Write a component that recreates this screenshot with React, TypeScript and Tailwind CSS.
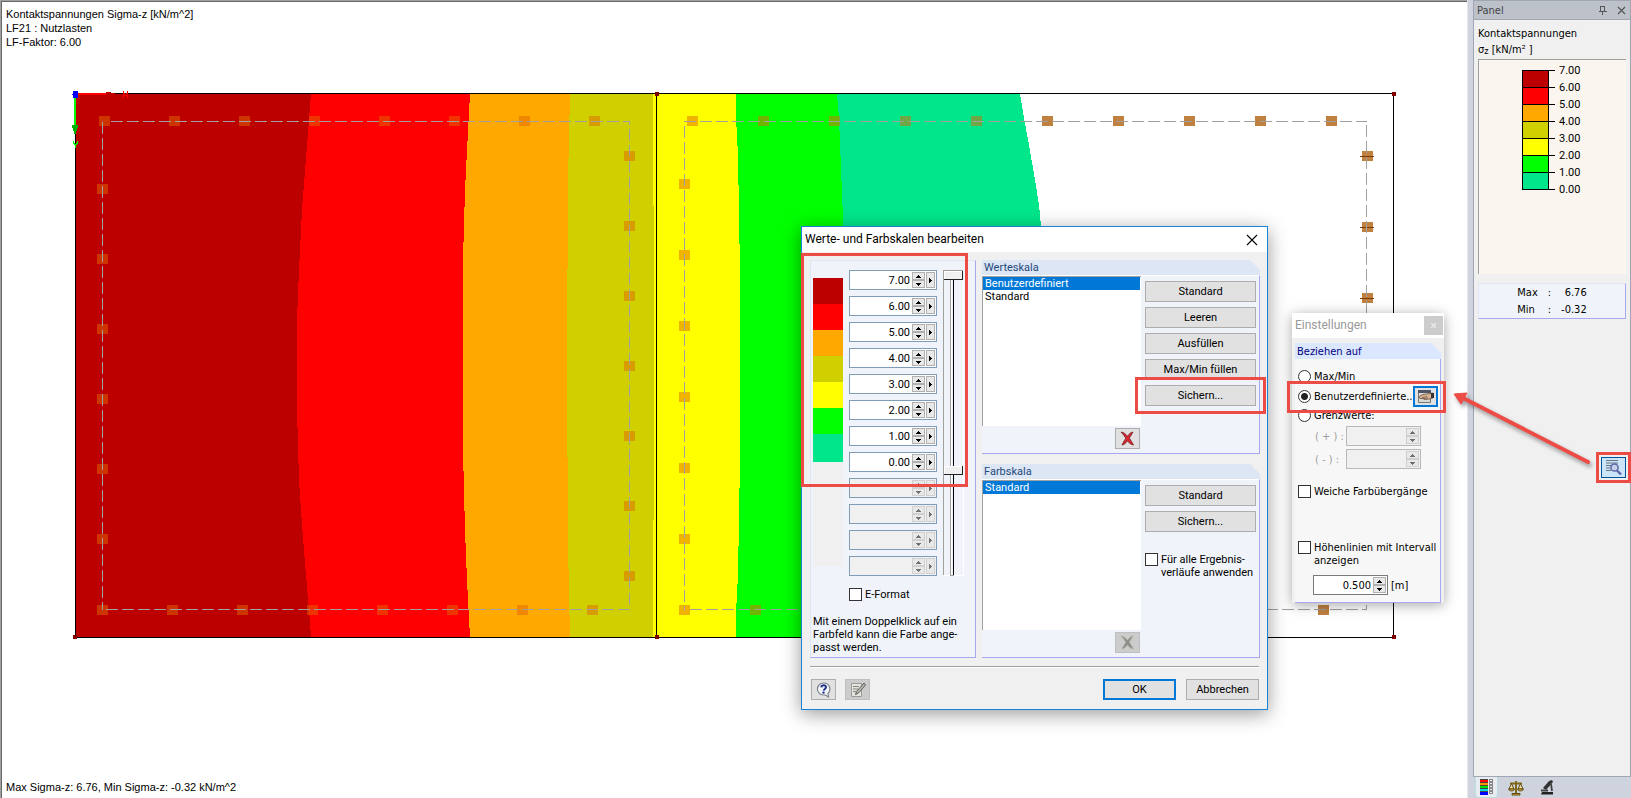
import { useId, type ReactNode } from "react";
import { clsx } from "clsx";

const ui = "font-['Roboto','Liberation_Sans',sans-serif] text-[11px] leading-[13px]";
const tahoma = "font-['DejaVu_Sans_Condensed','DejaVu_Sans',sans-serif] text-[11px] leading-[13px]";

const scale = [
    { value: "7.00", color: "#bc0000" },
    { value: "6.00", color: "#ff0000" },
    { value: "5.00", color: "#ffa800" },
    { value: "4.00", color: "#d0d000" },
    { value: "3.00", color: "#ffff00" },
    { value: "2.00", color: "#00ff00" },
    { value: "1.00", color: "#00e68a" },
    { value: "0.00", color: "" },
];

const range = (start: number, step: number, count: number) =>
    Array.from({ length: count }, (_, i) => start + i * step);

function Support({ x, y, solid, line }: { x: number; y: number; solid?: boolean; line?: boolean }) {
    return (
        <g>
            <rect x={x - 5} y={y - 5} width="11" height="10" fill={solid ? "#c08040" : "#e06800"} fillOpacity={solid ? 1 : 0.5} />
            {line && <path d={`M${x - 7} ${y + 0.5}h14`} stroke="#7a3c00" />}
        </g>
    );
}

function Plot() {
    return (
        <svg className="absolute inset-0 h-full w-full" shapeRendering="crispEdges" aria-hidden="true">
            <rect x="76" y="94" width="580" height="543" fill="#bc0000" />
            <path d="M311 94L309 120L305 170L302 210L299 270L297 320L297 410L299 480L302 525L305 563L309 610L311 637H740V94Z" fill="#ff0000" />
            <path d="M470 94L467 150L465 190L463 260L463 365L463 450L465 530L467 580L470 637H740V94Z" fill="#ffa800" />
            <path d="M570 94L568 180L567 365L568 545L570 637H740V94Z" fill="#d0d000" />
            <path d="M653 94V206H654V520H653V637H740V94Z" fill="#ffff00" />
            <path d="M736 94V118L738 155L740 272V460L738 575L736 612V637H900V94Z" fill="#00ff00" />
            <path d="M837 94L839 118L843 218L845 365L837 637H1020L1035 540L1044 365L1041 226L1039 205L1035 180L1029 145L1024 118L1020 94Z" fill="#00e68a" />

            {range(104, 70, 8).map((x) => <Support key={x} x={x} y={121} />)}
            {range(102, 70, 8).map((x) => <Support key={x} x={x} y={610} />)}
            {range(189, 70, 6).map((y) => <Support key={y} x={102} y={y} />)}
            {range(156, 70, 7).map((y) => <Support key={y} x={629} y={y} />)}
            {range(692, 71, 5).map((x) => <Support key={x} x={x} y={121} />)}
            {range(1047, 71, 5).map((x) => <Support key={x} x={x} y={121} solid />)}
            {range(184, 71, 6).map((y) => <Support key={y} x={684} y={y} />)}
            {range(684, 71, 2).map((x) => <Support key={x} x={x} y={610} />)}
            {range(156, 71, 6).map((y) => <Support key={y} x={1367} y={y} solid line />)}
            <Support x={1323} y={610} solid />

            <g fill="none" stroke="#a0a0a0" strokeDasharray="12 4">
                <path d="M111 121.5H629" />
                <path d="M102.5 122V610" />
                <path d="M629.5 121V610" strokeDashoffset="8" />
                <path d="M106 609.5H629" />
                <path d="M684 121.5H1367" />
                <path d="M684.5 126V610" />
                <path d="M1366.5 125V610" />
                <path d="M690 609.5H1367" />
            </g>

            <path d="M75.5 93.5H1393.5V637.5H75.5ZM656.5 93.5V637.5" fill="none" stroke="#000" />
            <g fill="#800000">
                <rect x="73" y="635" width="4" height="4" />
                <rect x="655" y="92" width="4" height="4" />
                <rect x="655" y="635" width="4" height="4" />
                <rect x="1392" y="92" width="4" height="4" />
                <rect x="1392" y="635" width="4" height="4" />
            </g>

            <path d="M78 94H107" stroke="#ff0000" strokeWidth="2" />
            <path d="M106 92h5v1h4v2h-4v1h-5Z" fill="#bc0000" />
            <path d="M123.5 91v2l4 3v2M127.5 91v2l-4 3v2" stroke="#ff0000" fill="none" />
            <path d="M75 96V126" stroke="#00ff00" strokeWidth="2" />
            <path d="M72 125h6v2l-2 5v2h-2v-2l-2-5Z" fill="#00b000" />
            <path d="M73.5 141v2l2 2v3M77.5 141v2l-2 2" stroke="#00ff00" fill="none" />
            <path d="M73 91h5v7h-5v-3h-1v-1h1Z" fill="#0000ff" />
        </svg>
    );
}

function Spin({ value, label, width, more, disabled, tone }: {
    value?: string; label: string; width: string; more?: boolean; disabled?: boolean; tone: string;
}) {
    const button = clsx("flex items-center justify-center border bg-[#e8e8e8]", disabled ? "border-[#d0d0d0]" : "border-[#b0b0b0]");
    const ink = disabled ? "#707070" : "#000";
    return (
        <div className={clsx("flex h-5 border p-px", width, tone, disabled ? "bg-[#f0f0f0]" : "bg-white")}>
            <input aria-label={label} defaultValue={value} disabled={disabled} className="w-0 min-w-0 flex-1 bg-transparent pr-0.5 text-right outline-none" />
            <div className="flex w-[13px] flex-col">
                <button disabled={disabled} aria-label={`${label} erhöhen`} className={clsx(button, "flex-1")}>
                    <svg width="5" height="3" shapeRendering="crispEdges"><path d="M2 0h1v1h1v1h1v1H0V2h1V1h1Z" fill={ink} /></svg>
                </button>
                <button disabled={disabled} aria-label={`${label} verringern`} className={clsx(button, "flex-1")}>
                    <svg width="5" height="3" shapeRendering="crispEdges"><path d="M0 0h5v1H4v1H3v1H2V2H1V1H0Z" fill={ink} /></svg>
                </button>
            </div>
            {more && (
                <button disabled={disabled} aria-label={`${label} auswählen`} className={clsx(button, "ml-px w-[9px]")}>
                    <svg width="3" height="5" shapeRendering="crispEdges"><path d="M0 0h1v1h1v1h1v1H2v1H1v1H0Z" fill={ink} /></svg>
                </button>
            )}
        </div>
    );
}

function Check({ type = "checkbox", name, checked, children }: {
    type?: "checkbox" | "radio"; name?: string; checked?: boolean; children: ReactNode;
}) {
    const id = useId();
    return (
        <div className="flex items-start gap-[3px]">
            <input
                id={id}
                type={type}
                name={name}
                defaultChecked={checked}
                className={clsx(
                    "size-[13px] shrink-0 appearance-none border border-[#333] bg-white",
                    type === "radio" && "rounded-full checked:bg-[radial-gradient(circle,#222_0_3px,#fff_4px)]",
                )}
            />
            <label htmlFor={id} className="whitespace-nowrap">{children}</label>
        </div>
    );
}

function PushButton({ children, primary, className }: { children: ReactNode; primary?: boolean; className: string }) {
    return (
        <button className={clsx("h-[21px] bg-[#e1e1e1]", primary ? "border-2 border-[#0078d7]" : "border border-[#adadad]", className)}>
            {children}
        </button>
    );
}

function IconButton({ label, disabled, children }: { label: string; disabled?: boolean; children: ReactNode }) {
    return (
        <button
            aria-label={label}
            disabled={disabled}
            className={clsx("flex h-[21px] w-[25px] items-center justify-center border", disabled ? "border-[#bfbfbf] bg-[#cccccc]" : "border-[#adadad] bg-[#e1e1e1]")}
        >
            {children}
        </button>
    );
}

function DeleteIcon({ color, shade }: { color: string; shade: string }) {
    return (
        <svg width="15" height="15" viewBox="0 0 15 15">
            <path d="M1 1c3 .6 4.700 2 6.500 4.200C9 3 10.500 1.500 13 1c-1 2-2.500 4-3.700 6 1.300 2 2.700 4.300 4.200 7-3-.5-4.500-2-6-4.200C6 12 4.500 13.500 2 14c1-2.500 2.500-4.500 3.800-6.800C4.500 5 3 3 1 1Z" fill={color} stroke={shade} strokeWidth=".8" />
        </svg>
    );
}

function ScaleGroup({ title, items, buttons, icon, deleteDisabled, children }: {
    title: string; items: string[]; buttons: string[]; icon: ReactNode; deleteDisabled?: boolean; children?: ReactNode;
}) {
    return (
        <section className="border-b border-[#a8a8ee]">
            <h2 className="h-[15px] bg-[#dce6f5] pl-0.5 pt-px text-[#1f497d] [clip-path:polygon(0_0,calc(100%-10px)_0,100%_10px,100%_100%,0_100%)]">{title}</h2>
            <div className="flex justify-between border-r border-t border-r-[#a8a8ee] border-t-white bg-[#f0f4fa] pb-1 pr-[3px]">
                <div className="w-[159px]">
                    <ul role="listbox" aria-label={title} className="h-[150px] border-l border-t border-[#a0a0a0] bg-white">
                        {items.map((item, i) => (
                            <li key={item} role="option" aria-selected={i === 0} className={clsx("mr-px h-[13px] pl-0.5", i === 0 && "bg-[#0078d7] text-white")}>
                                {item}
                            </li>
                        ))}
                    </ul>
                    <div className="mt-0.5 flex justify-end pr-px">
                        <IconButton label={`${title} löschen`} disabled={deleteDisabled}>{icon}</IconButton>
                    </div>
                </div>
                <div className="flex w-[112px] flex-col gap-[5px] pl-px pt-[5px]">
                    {buttons.map((b) => <PushButton key={b} className="w-full">{b}</PushButton>)}
                    {children}
                </div>
            </div>
        </section>
    );
}

function ScaleDialog() {
    return (
        <div role="dialog" aria-label="Werte- und Farbskalen bearbeiten" className={clsx("absolute left-[801px] top-[226px] w-[467px] border border-[#1883d7] bg-[#f0f0f0] shadow-[0_4px_18px_rgba(0,0,0,0.4)]", ui)}>
            <header className="flex h-[25px] items-center justify-between bg-white pl-[3px] pr-[9px] text-[12px]">
                <h1>Werte- und Farbskalen bearbeiten</h1>
                <button aria-label="Schließen">
                    <svg width="12" height="12" viewBox="0 0 12 12"><path d="M1 1L11 11M11 1L1 11" stroke="#000" strokeWidth="1.100" /></svg>
                </button>
            </header>
            <div className="flex gap-1.5 pl-2 pr-[7px] pt-2">
                <section className="w-[166px] border border-b-[#a8a8ee] border-l-[#dce6f5] border-r-[#a8a8ee] border-t-[#dce6f5] bg-[#f0f4fa] pl-0.5 pt-[9px]">
                    <div className="flex gap-1.5">
                        <div className="mt-2 flex h-[288px] w-[30px] flex-col bg-[#f0f0f0]">
                            {scale.slice(0, 7).map((s) => (
                                <button key={s.value} aria-label={`Farbe ${s.value}`} className="h-[26px] last:h-7" style={{ background: s.color }} />
                            ))}
                        </div>
                        <div className="flex flex-col gap-1.5">
                            {range(0, 1, 12).map((i) => (
                                <Spin key={i} label={`Wert ${i + 1}`} value={scale[i]?.value} disabled={!scale[i]} width="w-[88px]" tone="border-[#7f9db9]" more />
                            ))}
                        </div>
                        <svg width="21" height="306" shapeRendering="crispEdges" aria-hidden="true">
                            <path d="M.5 0V306M7.500 4V306" stroke="#a0a0a0" />
                            <path d="M8.500 0V306M20.500 10V306M0 305.500H21" stroke="#fff" />
                            <path d="M10.500 4V306" stroke="#000" strokeWidth="1" />
                            <path d="M1 .5h19M7 305.500h4" stroke="#a0a0a0" />
                            {[1, 196].map((y) => (
                                <g key={y}>
                                    <rect x="1" y={y} width="18" height="8" fill="#f0f0f0" />
                                    <path d={`M1 ${y + 0.5}H19M1.500 ${y}v8`} stroke="#fff" />
                                    <path d={`M1 ${y + 8.5}H19.500V${y}`} fill="none" stroke="#222" />
                                </g>
                            ))}
                        </svg>
                    </div>
                    <div className="mt-3 pl-9"><Check>E-Format</Check></div>
                    <p className="mb-[3px] mt-3.5 whitespace-nowrap">Mit einem Doppelklick auf ein<br />Farbfeld kann die Farbe ange-<br />passt werden.</p>
                </section>
                <div className="flex flex-1 flex-col justify-between">
                    <ScaleGroup title="Werteskala" items={["Benutzerdefiniert", "Standard"]} buttons={["Standard", "Leeren", "Ausfüllen", "Max/Min füllen", "Sichern..."]} icon={<DeleteIcon color="#dc2830" shade="#702020" />} />
                    <ScaleGroup title="Farbskala" items={["Standard"]} buttons={["Standard", "Sichern..."]} icon={<DeleteIcon color="#8c8c84" shade="#b0b0aa" />} deleteDisabled>
                        <div className="mt-4"><Check>Für alle Ergebnis-<br />verläufe anwenden</Check></div>
                    </ScaleGroup>
                </div>
            </div>
            <footer className="mx-2 mt-2 flex items-center justify-between border-t border-[#a0a0a0] pb-[9px] pt-3 shadow-[inset_0_1px_#fff]">
                <div className="flex gap-[9px] pl-px">
                    <IconButton label="Hilfe">
                        <svg width="16" height="16" viewBox="0 0 16 16">
                            <path d="M7.500 1a6 6 0 0 1 4.500 10.300L12.500 15 9 12.800A6 6 0 1 1 7.500 1Z" fill="#f4f6f8" stroke="#7d858e" strokeWidth="1.200" />
                            <path d="M5.300 5.300c.3-2.600 4.800-2.600 4.700 0 0 1.500-2.200 1.800-2.300 3.300" fill="none" stroke="#22338c" strokeWidth="2" />
                            <circle cx="7.500" cy="10.600" r="1.200" fill="#22338c" />
                        </svg>
                    </IconButton>
                    <IconButton label="Bearbeiten" disabled>
                        <svg width="16" height="16" viewBox="0 0 16 16">
                            <path d="M1.500 1.500h10v13h-10Z" fill="#e4e4e0" stroke="#9a9a94" />
                            <path d="M3 4.500h6M3 7h5M3 9.500h3" stroke="#85857f" />
                            <path d="M14 1l1.500 2L8.500 11l-3 1.500L6.500 9.500Z" fill="#b5b5af" stroke="#5f5f5a" />
                        </svg>
                    </IconButton>
                </div>
                <div className="flex gap-2.5">
                    <PushButton primary className="w-[73px]">OK</PushButton>
                    <PushButton className="w-[73px]">Abbrechen</PushButton>
                </div>
            </footer>
            <div className="pointer-events-none absolute left-[-1px] top-[26px] h-[234px] w-[167px] border-[3px] border-[#ed4c46]" />
            <div className="pointer-events-none absolute left-[333px] top-[150px] h-[37px] w-[131px] border-[3px] border-[#ed4c46]" />
        </div>
    );
}

function SettingsWindow() {
    return (
        <div role="dialog" aria-label="Einstellungen" className={clsx("absolute right-[187px] top-[313px] w-[152px] bg-[#f0f0f0] shadow-[0_2px_12px_rgba(0,0,0,0.35)]", tahoma)}>
            <header className="flex h-[25px] items-center justify-between bg-white pl-[3px] pr-px font-['Roboto',sans-serif] text-[12px] text-[#999]">
                <h2>Einstellungen</h2>
                <button aria-label="Schließen" className="flex size-[19px] items-center justify-center bg-[#cccccc]">
                    <svg width="5" height="5"><path d="M0 0L5 5M5 0L0 5" stroke="#e8e8e8" strokeWidth="1.500" /></svg>
                </button>
            </header>
            <div className="px-[3px] pt-[5px]">
                <h3 className="h-4 bg-[#dbe6ff] pl-0.5 pt-0.5 text-[#000080] [clip-path:polygon(0_0,calc(100%-10px)_0,100%_10px,100%_100%,0_100%)]">Beziehen auf</h3>
                <div className="h-[244px] border-b border-r border-[#a8a8ee] bg-[#f7f7f7] pl-[3px] pt-[11px]">
                    <Check type="radio" name="ref">Max/Min</Check>
                    <div className="flex h-[26px] items-center">
                        <Check type="radio" name="ref" checked>Benutzerdefinierte..</Check>
                        <button aria-label="Skalen bearbeiten" className="ml-auto mr-1 flex h-[21px] w-[25px] shrink-0 items-center justify-center border-2 border-[#0078d7] bg-[#e1e1e1]">
                            <svg width="17" height="15" viewBox="0 0 17 15">
                                <path d="M1.500 1.500h12v12h-12Z" fill="#d8d8d4" stroke="#777" />
                                <path d="M1 1h13v3H1Z" fill="#4d5566" />
                                <path d="M2 8c2-2 5-3 8-3l6-1v5l-4 1-4 .5-2-1L3 9.500Z" fill="#d9b596" stroke="#6b4a38" strokeWidth=".8" />
                                <path d="M5 8.500l5-1M6 9.800l5-1" stroke="#6b4a38" strokeWidth=".7" />
                                <path d="M14 4h3v5h-3Z" fill="#333" />
                            </svg>
                        </button>
                    </div>
                    <Check type="radio" name="ref">Grenzwerte:</Check>
                    <div className="mt-1 flex flex-col gap-[3px] pl-[17px] pr-[19px] text-[#a0a0a0]">
                        <div className="flex items-center justify-between"><span>( + ) :</span><Spin label="Oberer Grenzwert" width="w-[75px]" tone="border-[#b8b8b8]" disabled /></div>
                        <div className="flex items-center justify-between"><span>( - ) :</span><Spin label="Unterer Grenzwert" width="w-[75px]" tone="border-[#b8b8b8]" disabled /></div>
                    </div>
                    <div className="mt-4"><Check>Weiche Farbübergänge</Check></div>
                    <div className="mt-[43px]"><Check>Höhenlinien mit Intervall<br />anzeigen</Check></div>
                    <div className="mt-2 flex items-center gap-[3px] pl-[15px]">
                        <Spin label="Intervall" value="0.500" width="w-[75px]" tone="border-[#7a7a7a]" />
                        <span>[m]</span>
                    </div>
                </div>
            </div>
            <div className="pointer-events-none absolute left-[-5px] top-[68px] h-8 w-[159px] border-[3px] border-[#ed4c46]" />
        </div>
    );
}

function SidePanel() {
    return (
        <aside className={clsx("flex w-[164px] shrink-0 flex-col border-l border-[#e4e6ec] bg-[#cfd3dd] pl-[5px]", tahoma)}>
            <div className="flex flex-1 flex-col border border-[#a0a6b4] bg-[#f0f0f0]">
                <header className="flex h-[19px] items-center justify-between border-b border-[#a0a6b4] bg-[#bcc1ca] pl-[3px] pr-1 text-[#444]">
                    <h2>Panel</h2>
                    <div className="flex items-center gap-2.5">
                        <button aria-label="Anheften">
                            <svg width="8" height="9" viewBox="0 0 8 9" shapeRendering="crispEdges"><path d="M1.500 5V.5h4V5M0 5.500h8M3.500 6v3M5 1v4" fill="none" stroke="#555" /></svg>
                        </button>
                        <button aria-label="Schließen">
                            <svg width="9" height="9" viewBox="0 0 9 9"><path d="M1 1L8 8M8 1L1 8" stroke="#555" strokeWidth="1.200" /></svg>
                        </button>
                    </div>
                </header>
                <div className="flex flex-col pb-4 pl-1 pr-1 pt-1.5">
                    <p className="h-4 leading-4">Kontaktspannungen</p>
                    <p className="h-4 leading-4">σ<sub className="static align-[-1px] text-[9px] leading-none">z</sub> [kN/m² ]</p>
                    <div className="mt-px flex h-[215px] border-l border-t border-[#a0a0a0] bg-[#faf6ef] pl-[43px] pt-0.5">
                        <div className="mt-2 h-[120px] w-[27px] border-x border-t border-black">
                            {scale.slice(0, 7).map((s) => (
                                <div key={s.value} className="h-[17px] border-b border-black" style={{ background: s.color }} />
                            ))}
                        </div>
                        <div className={ui}>
                            {scale.map((s) => (
                                <div key={s.value} className="flex h-[17px] items-center gap-1">
                                    <span className="h-px w-1.5 bg-black" />
                                    <span>{s.value}</span>
                                </div>
                            ))}
                        </div>
                    </div>
                    <dl className="mt-[9px] grid grid-cols-[auto_auto_auto] justify-center gap-x-2.5 border border-b-[#a8a8ee] border-l-[#e0e6f4] border-r-[#a8a8ee] border-t-[#e0e6f4] bg-[#f0f4fa] leading-[17px]">
                        <dt>Max</dt><dd>:</dd><dd className="text-right">6.76</dd>
                        <dt>Min</dt><dd>:</dd><dd className="text-right">-0.32</dd>
                    </dl>
                    <div className="-mr-[5px] mt-[133px] self-end border-[3px] border-[#ed4c46] p-0.5">
                        <button aria-label="Einstellungen öffnen" className="flex h-[21px] w-[25px] items-center justify-center border border-[#005499] bg-[#cce4f7]">
                            <svg width="17" height="17" viewBox="0 0 17 17">
                                <path d="M1 1.500h12M1 4h12M1 6.500h5M1 9h4M1 11.500h5" stroke="#66757f" />
                                <circle cx="9.500" cy="8.500" r="3.600" fill="#c8d0e8" stroke="#5c66a8" strokeWidth="1.500" />
                                <path d="M12 11.500l4 4" stroke="#5c66a8" strokeWidth="2.400" />
                            </svg>
                        </button>
                    </div>
                </div>
            </div>
            <nav className="flex h-[21px] gap-[5px] pl-0.5">
                <button aria-label="Farbskala" className="flex w-[23px] items-center justify-center rounded-b border border-t-0 border-[#b9dfe0] bg-[#e8ecf0]">
                    <svg width="14" height="16" viewBox="0 0 14 16" shapeRendering="crispEdges">
                        {["#ff0000", "#ff9000", "#00e000", "#00d8e8", "#0000ff"].map((c, i) => (
                            <g key={c}>
                                <rect x="0" y={i * 3 + 0.5} width="8" height="3" fill={c} />
                                <path d={`M0 ${i * 3 + 0.5}h8`} stroke="#444" />
                                <rect x="9.500" y={i * 3 + 0.5} width="3" height="2" fill="none" stroke="#888" />
                            </g>
                        ))}
                    </svg>
                </button>
                <button aria-label="Faktoren" className="flex w-[26px] items-center justify-center">
                    <svg width="16" height="16" viewBox="0 0 16 16" fill="none" stroke="#5c4a10">
                        <path d="M8 1v12M2 3.500h12" stroke="#806a1c" strokeWidth="2" />
                        <path d="M3.500 3.500L1 9h5ZM12.500 3.500L10 9h5Z" fill="#f0e4b0" />
                        <path d="M.5 9h6c-.5 2.500-5.500 2.500-6 0ZM9.500 9h6c-.5 2.500-5.500 2.500-6 0ZM4 13.500h8v1.500H4Z" fill="#e0b83c" />
                    </svg>
                </button>
                <button aria-label="Filter" className="flex w-[26px] items-center justify-center">
                    <svg width="15" height="15" viewBox="0 0 15 15">
                        <path d="M9 1l3-1 1 2-7 8-3-2Z" fill="#333" />
                        <path d="M11 4l1 7M1 10.500h7" fill="none" stroke="#444" strokeWidth="1.800" />
                        <path d="M2 12h11v2.500H1Z" fill="#222" />
                    </svg>
                </button>
            </nav>
        </aside>
    );
}

export default function App() {
    return (
        <div className="relative flex h-screen overflow-hidden bg-white text-black">
            <main className="relative flex min-w-0 flex-1 flex-col justify-between pb-1 pl-1.5 pt-[7px] font-['Liberation_Sans',sans-serif] text-[11px] leading-[14px] shadow-[inset_1px_1px_#a0a0a0,inset_2px_2px_#696969]">
                <Plot />
                <p>Kontaktspannungen Sigma-z [kN/m^2]<br />LF21 : Nutzlasten<br />LF-Faktor: 6.00</p>
                <p>Max Sigma-z: 6.76, Min Sigma-z: -0.32 kN/m^2</p>
            </main>
            <SidePanel />
            <ScaleDialog />
            <SettingsWindow />
            <svg className="pointer-events-none absolute right-9 top-[385px] drop-shadow-[2px_3px_2px_rgba(0,0,0,0.4)]" width="150" height="90" viewBox="0 0 150 90" aria-hidden="true">
                <path d="M18 13L143 77" stroke="#ed4c46" strokeWidth="4" strokeLinecap="round" />
                <path d="M9 9L22 8L16 19Z" fill="#ed4c46" stroke="#ed4c46" />
            </svg>
        </div>
    );
}
